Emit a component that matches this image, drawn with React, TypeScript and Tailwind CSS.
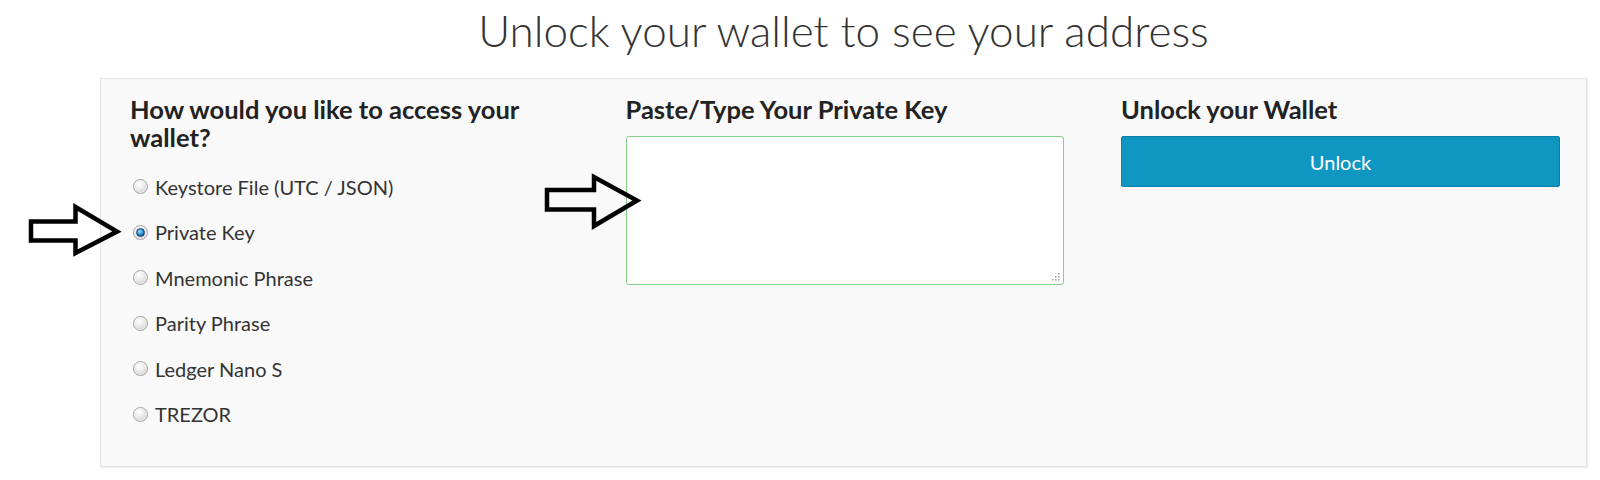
import { useState } from "react";

const OPTIONS = [
  "Keystore File (UTC / JSON)",
  "Private Key",
  "Mnemonic Phrase",
  "Parity Phrase",
  "Ledger Nano S",
  "TREZOR",
];

function Radio({ checked }: { checked: boolean }) {
  return (
    <span className="relative flex h-[15px] w-[15px] shrink-0 items-center justify-center rounded-full border border-[#a2a2a2] bg-[radial-gradient(circle_at_38%_32%,#ffffff_0%,#ececec_40%,#c4c4c4_100%)] shadow-[inset_0_0_0_1px_rgba(255,255,255,0.6)]">
      {checked && (
        <span className="h-[9px] w-[9px] rounded-full border border-[#1b3d5c] bg-[radial-gradient(circle_at_40%_35%,#a6e0ff_0%,#2b92da_45%,#0a3c6a_100%)]" />
      )}
    </span>
  );
}

export default function App() {
  const [choice, setChoice] = useState("Private Key");
  const [key, setKey] = useState("");

  return (
    <div className="relative h-[480px] w-[1600px] overflow-hidden bg-white font-['Lato','Open_Sans',sans-serif] text-[#333]">
      <div className="ml-[100px] w-[1487px]">
        <h1 className="mb-[26px] pt-[8px] text-center text-[44px] font-light leading-[44px] text-[#333]">
          Unlock your wallet to see your address
        </h1>

        <div className="h-[389px] border border-[#e2e2e2] bg-[#f9f9f9] pl-[29px] pt-[16px] shadow-[1px_1px_1px_rgba(0,0,0,0.06)]">
          <div className="grid grid-cols-[438px_438px_439px] gap-x-[57.5px]">
            {/* access method */}
            <div>
              <h3 className="text-[25.5px] font-bold leading-[28px] text-[#222]">
                How would you like to access your wallet?
              </h3>
              <div className="mt-[13px]">
                {OPTIONS.map((o) => (
                  <label
                    key={o}
                    onClick={() => setChoice(o)}
                    className="flex h-[45.5px] cursor-pointer items-center gap-[7px] pl-[3px] text-[20px] leading-[24px] text-[#333]"
                  >
                    <Radio checked={choice === o} />
                    <span>{o}</span>
                  </label>
                ))}
              </div>
            </div>

            {/* key input */}
            <div>
              <h3 className="text-[25.5px] font-bold leading-[28px] text-[#222]">
                Paste/Type Your Private Key
              </h3>
              <div className="relative mt-[13px] h-[149px]">
                <textarea
                  value={key}
                  onChange={(e) => setKey(e.target.value)}
                  className="h-full w-full resize-none rounded-[3px] border border-[#86d086] bg-white px-3 py-2 text-[16px] outline-none"
                />
                <svg
                  className="pointer-events-none absolute bottom-[4px] right-[4px]"
                  width="8"
                  height="8"
                  viewBox="0 0 8 8"
                >
                  <rect x="6" y="0" width="1.5" height="1.5" fill="#9a9a9a" />
                  <rect x="3" y="3" width="1.5" height="1.5" fill="#9a9a9a" />
                  <rect x="6" y="3" width="1.5" height="1.5" fill="#9a9a9a" />
                  <rect x="0" y="6" width="1.5" height="1.5" fill="#9a9a9a" />
                  <rect x="3" y="6" width="1.5" height="1.5" fill="#9a9a9a" />
                  <rect x="6" y="6" width="1.5" height="1.5" fill="#9a9a9a" />
                </svg>
              </div>
            </div>

            {/* unlock */}
            <div>
              <h3 className="text-[25.5px] font-bold leading-[28px] text-[#222]">
                Unlock your Wallet
              </h3>
              <button className="mt-[13px] flex h-[51px] w-full items-center justify-center rounded-[2px] border border-[#0b80a6] bg-[#1097c1] text-[20px] text-white">
                Unlock
              </button>
            </div>
          </div>
        </div>
      </div>

      {/* hand-drawn pointer arrows */}
      <svg
        className="pointer-events-none absolute inset-0"
        width="1600"
        height="480"
        viewBox="0 0 1600 480"
      >
        <polygon
          points="31,221.5 75.5,221.5 75.5,207 117,231.5 75.5,253 75.5,240.5 31,240.5"
          fill="none"
          stroke="#000"
          strokeWidth="4.5"
          strokeLinejoin="miter"
        />
        <polygon
          points="547,190 594,190 594,177 637,200.5 594,226 594,209.5 547,209.5"
          fill="none"
          stroke="#000"
          strokeWidth="4.5"
          strokeLinejoin="miter"
        />
      </svg>
    </div>
  );
}
